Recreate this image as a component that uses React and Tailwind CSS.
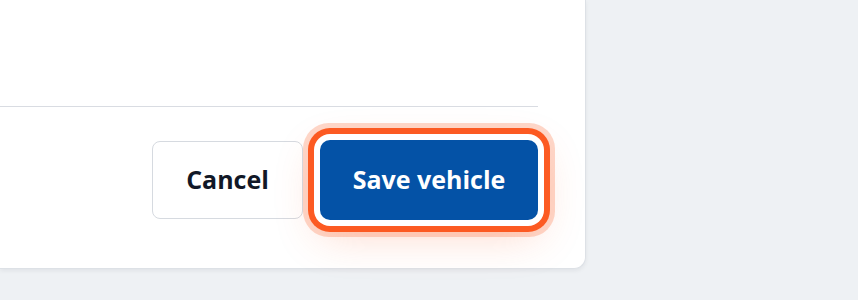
export default function App() {
  return (
    <div
      className="relative h-[300px] w-[858px] overflow-hidden bg-[#eef1f4]"
      style={{ fontFamily: "'Open Sans', 'Noto Sans', sans-serif" }}
    >
      <div className="flex h-[269px] w-[586px] flex-col rounded-br-[12px] border-r border-b border-[#dde1e6] bg-white pr-[47px] shadow-[0_2px_4px_rgba(15,23,42,0.06)]">
        <div className="h-[107px] border-b border-[#d9dce2]" />
        <div className="flex flex-1 items-start justify-end gap-[17px] pt-[33px]">
          <button className="mt-[1px] flex h-[78px] w-[151px] items-center justify-center rounded-[8px] border border-[#d6dae0] bg-white text-[25px] font-bold text-[#111827]">
            Cancel
          </button>
          <button className="flex h-[80px] w-[218px] items-center justify-center rounded-[10px] bg-[#0452a6] text-[25px] font-bold text-white ring-[6px] ring-[#fc5a22] ring-offset-[6px] ring-offset-white shadow-[0_0_0_17px_rgba(252,110,60,0.28),0_14px_44px_rgba(252,90,34,0.25)]">
            Save vehicle
          </button>
        </div>
      </div>
    </div>
  );
}
